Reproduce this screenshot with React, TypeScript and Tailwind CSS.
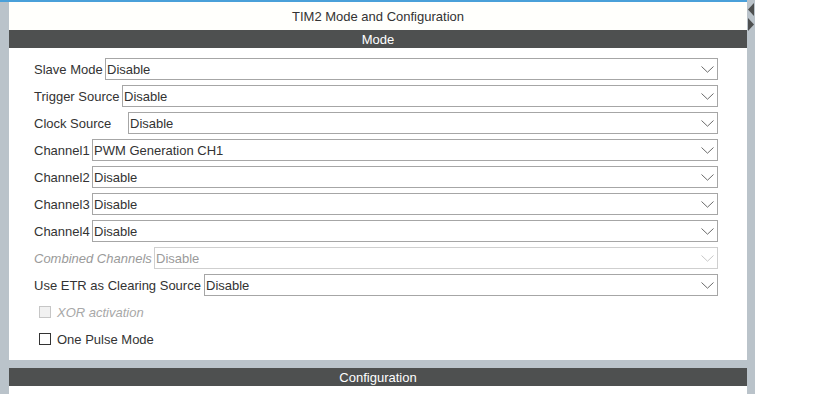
import React from "react";

const Chevron = ({ disabled }: { disabled?: boolean }) => (
  <svg width="13" height="7" viewBox="0 0 13 7" className="shrink-0 mr-[3px]">
    <path d="M0.5 0.5 L6.5 6.2 L12.5 0.5" fill="none" stroke={disabled ? "#c8c8c8" : "#6a6a6a"} strokeWidth="1" />
  </svg>
);

type RowProps = { label: string; value: string; lw: number; disabled?: boolean };

const SelectRow = ({ label, value, lw, disabled }: RowProps) => (
  <div className="flex items-center h-[22px]">
    <div
      className={`shrink-0 whitespace-nowrap ${disabled ? "italic text-[#9a9a9a]" : "text-[#333]"}`}
      style={{ width: lw }}
    >
      {label}
    </div>
    <div
      className={`flex-1 h-[22px] flex items-center justify-between border bg-white pl-[1px] ${
        disabled ? "border-[#cfcfcf] text-[#9a9a9a]" : "border-[#a6a6a6] text-[#333]"
      }`}
    >
      <span>{value}</span>
      <Chevron disabled={disabled} />
    </div>
  </div>
);

const CheckRow = ({ label, disabled }: { label: string; disabled?: boolean }) => (
  <div className="flex items-center h-[22px] pl-[5px]">
    <div
      className={`w-[12px] h-[12px] border ${disabled ? "border-[#c6c6c6] bg-[#f1f1f1]" : "border-[#333] bg-white"}`}
    />
    <span className={`ml-[6px] ${disabled ? "italic text-[#a8a8a8]" : "text-[#333]"}`}>{label}</span>
  </div>
);

export default function App() {
  const rows: RowProps[] = [
    { label: "Slave Mode", value: "Disable", lw: 71 },
    { label: "Trigger Source", value: "Disable", lw: 88 },
    { label: "Clock Source", value: "Disable", lw: 94 },
    { label: "Channel1", value: "PWM Generation CH1", lw: 58 },
    { label: "Channel2", value: "Disable", lw: 58 },
    { label: "Channel3", value: "Disable", lw: 58 },
    { label: "Channel4", value: "Disable", lw: 58 },
    { label: "Combined Channels", value: "Disable", lw: 120, disabled: true },
    { label: "Use ETR as Clearing Source", value: "Disable", lw: 170 },
  ];
  return (
    <div
      className="w-[829px] h-[394px] flex bg-white overflow-hidden text-[13px] leading-none"
      style={{ fontFamily: '"Liberation Sans", Arial, sans-serif' }}
    >
      <div className="w-[747px] flex flex-col shrink-0">
        <div className="h-[2px] bg-[#4aa0d9]" />
        <div className="flex flex-1">
          <div className="w-[9px] bg-[#bac3ca] shrink-0" />
          <div className="flex-1 flex flex-col bg-[#bac3ca]">
            <div className="bg-white flex flex-col">
              <div className="h-[28px] flex items-center justify-center text-[#333] bg-[#fffffc]">
                TIM2 Mode and Configuration
              </div>
              <div className="h-[18px] bg-[#4e5050] text-white flex items-center justify-center">Mode</div>
              <div className="flex flex-col gap-[5px] pt-[10px] pb-[10px] pl-[25px] pr-[29px]">
                {rows.map((r) => (
                  <SelectRow key={r.label} {...r} />
                ))}
                <CheckRow label="XOR activation" disabled />
                <CheckRow label="One Pulse Mode" />
              </div>
            </div>
            <div className="h-[8px]" />
            <div className="h-[18px] bg-[#4e5050] text-white flex items-center justify-center">Configuration</div>
            <div className="flex-1 bg-white" />
          </div>
        </div>
      </div>
      <div className="w-[8px] bg-[#bac3ca] shrink-0 flex flex-col items-center pt-[3px] gap-[2px]">
        <svg width="8" height="13" viewBox="0 0 8 13">
          <path d="M7 0 L1 6.5 L7 13 Z" fill="#4e5050" />
        </svg>
        <svg width="8" height="13" viewBox="0 0 8 13">
          <path d="M1 0 L7 6.5 L1 13 Z" fill="#4e5050" />
        </svg>
      </div>
      <div className="flex-1 bg-white" />
    </div>
  );
}
